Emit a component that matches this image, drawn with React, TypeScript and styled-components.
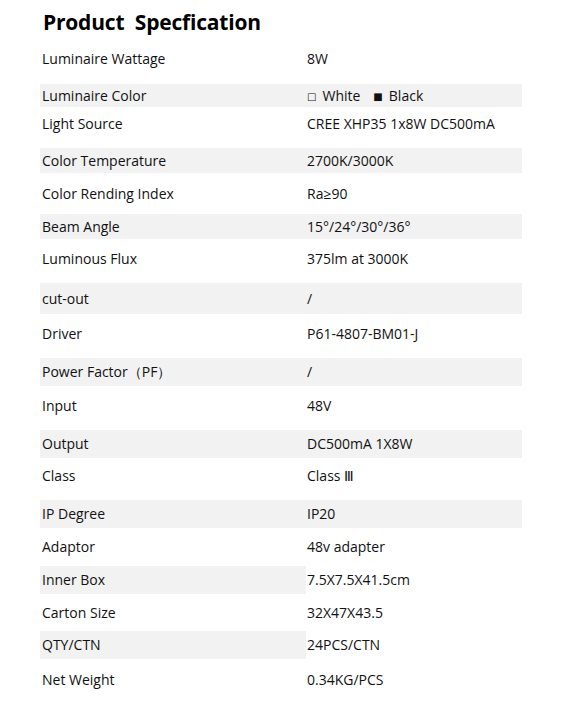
import React from 'react';
import styled, { createGlobalStyle } from 'styled-components';

const GlobalStyle = createGlobalStyle`
  html, body {
    margin: 0;
    padding: 0;
    background: #ffffff;
  }
  body {
    font-family: "Open Sans", "Noto Sans", sans-serif;
    color: #111111;
  }
`;

const Page = styled.div`
  width: 580px;
  min-height: 711px;
  box-sizing: border-box;
  padding: 0 0 0 40px;
`;

const Title = styled.h1`
  margin: 0;
  height: 44px;
  padding: 8px 0 0 3px;
  box-sizing: border-box;
  font-family: "Open Sans", sans-serif;
  font-size: 21px;
  font-weight: 700;
  letter-spacing: -0.2px;
  white-space: pre;
  color: #000000;
  line-height: 28px;
`;

const Table = styled.div`
  display: flex;
  flex-direction: column;
  width: 482px;
`;

const Row = styled.div<{ $h: number; $lift?: number; $shade?: 'full' | 'label' }>`
  display: grid;
  grid-template-columns: 266px 1fr;
  height: ${(p) => p.$h}px;
  box-sizing: border-box;
  padding-bottom: ${(p) => p.$lift ?? 0}px;
  align-items: center;
  background: ${(p) => (p.$shade === 'full' ? '#f2f2f2' : 'transparent')};
  font-size: 14px;
  line-height: 18px;
`;

const Label = styled.div<{ $shade?: boolean }>`
  height: 100%;
  display: flex;
  align-items: center;
  padding-left: 2px;
  background: ${(p) => (p.$shade ? '#f2f2f2' : 'transparent')};
`;

const Value = styled.div`
  display: flex;
  align-items: center;
  padding-left: 1px;
  white-space: pre;
`;

const Box = styled.span<{ $gap?: number }>`
  font-family: "DejaVu Sans", sans-serif;
  font-size: 10px;
  margin-left: ${(p) => p.$gap ?? 0}px;
  margin-right: 6px;
  position: relative;
  top: 1px;
`;

type Spec = {
  label: string;
  value: React.ReactNode;
  h: number;
  lift?: number;
  shade?: 'full' | 'label';
};

const specs: Spec[] = [
  { label: 'Luminaire Wattage', value: '8W', h: 40, lift: 10 },
  {
    label: 'Luminaire Color',
    value: (
      <>
        <Box>□</Box>White<Box $gap={13}>■</Box>Black
      </>
    ),
    h: 23,
    shade: 'full',
  },
  { label: 'Light Source', value: 'CREE XHP35 1x8W DC500mA', h: 41, lift: 7 },
  { label: 'Color Temperature', value: '2700K/3000K', h: 25, shade: 'full' },
  { label: 'Color Rending Index', value: 'Ra≥90', h: 41 },
  { label: 'Beam Angle', value: '15°/24°/30°/36°', h: 25, shade: 'full' },
  { label: 'Luminous Flux', value: '375lm at 3000K', h: 44, lift: 4 },
  { label: 'cut-out', value: '/', h: 31, shade: 'full' },
  { label: 'Driver', value: 'P61-4807-BM01-J', h: 44, lift: 4 },
  { label: 'Power Factor（PF）', value: '/', h: 28, shade: 'full' },
  { label: 'Input', value: '48V', h: 44, lift: 4 },
  { label: 'Output', value: 'DC500mA 1X8W', h: 28, shade: 'full' },
  { label: 'Class', value: 'Class Ⅲ', h: 42, lift: 6 },
  { label: 'IP Degree', value: 'IP20', h: 28, shade: 'full' },
  { label: 'Adaptor', value: '48v adapter', h: 38 },
  { label: 'Inner Box', value: '7.5X7.5X41.5cm', h: 28, shade: 'label' },
  { label: 'Carton Size', value: '32X47X43.5', h: 37 },
  { label: 'QTY/CTN', value: '24PCS/CTN', h: 28, shade: 'label' },
  { label: 'Net Weight', value: '0.34KG/PCS', h: 41 },
];

export default function App() {
  return (
    <Page>
      <GlobalStyle />
      <Title>{'Product  Specfication'}</Title>
      <Table>
        {specs.map((s) => (
          <Row key={s.label} $h={s.h} $lift={s.lift} $shade={s.shade}>
            <Label $shade={s.shade === 'label'}>{s.label}</Label>
            <Value>{s.value}</Value>
          </Row>
        ))}
      </Table>
    </Page>
  );
}
